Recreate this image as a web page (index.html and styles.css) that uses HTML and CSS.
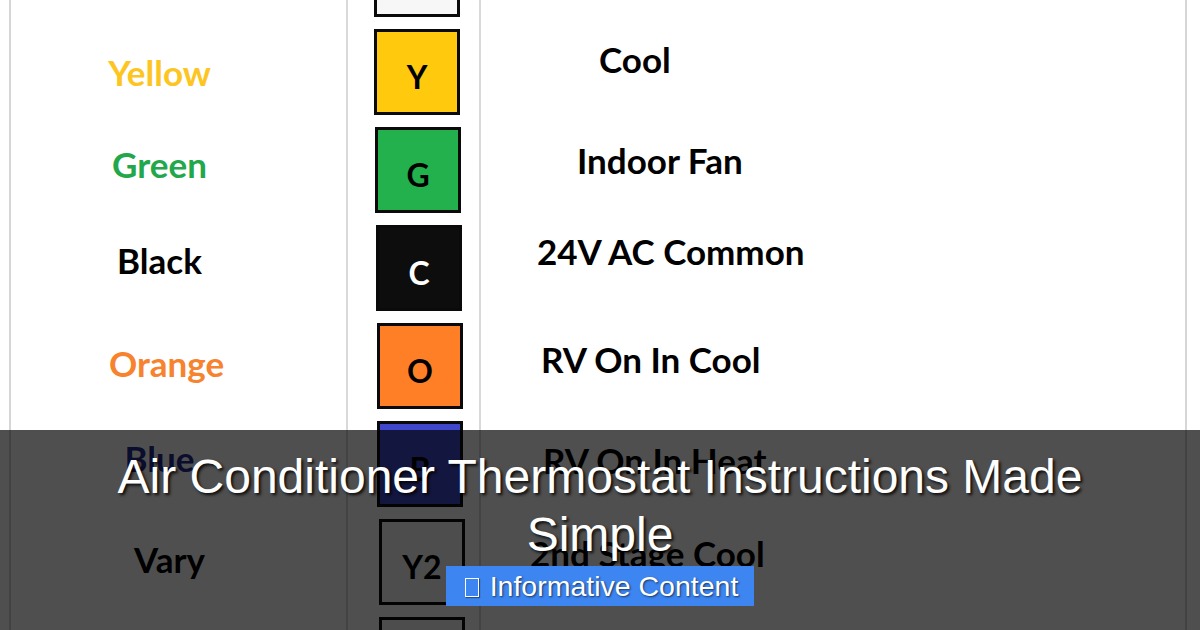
FILE: index.html
```html
<!DOCTYPE html>
<html lang="en">
<head>
<meta charset="utf-8">
<title>Air Conditioner Thermostat Instructions Made Simple</title>
<link rel="stylesheet" href="styles.css">
</head>
<body>
<div class="page">
  <div class="table">
    <div class="row">
      <div class="cell name"></div>
      <div class="cell term"><div class="box box-white"></div></div>
      <div class="cell func"></div>
    </div>
    <div class="row">
      <div class="cell name"><span class="c-yellow">Yellow</span></div>
      <div class="cell term t1"><div class="box box-yellow">Y</div></div>
      <div class="cell func f-cool"><span>Cool</span></div>
    </div>
    <div class="row">
      <div class="cell name n-green"><span class="c-green">Green</span></div>
      <div class="cell term t2"><div class="box box-green">G</div></div>
      <div class="cell func f-fan"><span>Indoor Fan</span></div>
    </div>
    <div class="row">
      <div class="cell name n-black"><span class="c-black">Black</span></div>
      <div class="cell term t3"><div class="box box-black">C</div></div>
      <div class="cell func f-common"><span>24V AC Common</span></div>
    </div>
    <div class="row">
      <div class="cell name n-orange"><span class="c-orange">Orange</span></div>
      <div class="cell term t4"><div class="box box-orange">O</div></div>
      <div class="cell func f-rvcool"><span>RV On In Cool</span></div>
    </div>
    <div class="row">
      <div class="cell name n-blue"><span class="c-blue">Blue</span></div>
      <div class="cell term t4"><div class="box box-blue">B</div></div>
      <div class="cell func f-rvheat"><span>RV On In Heat</span></div>
    </div>
    <div class="row">
      <div class="cell name n-vary"><span class="c-black">Vary</span></div>
      <div class="cell term t5"><div class="box box-white">Y2</div></div>
      <div class="cell func f-stage"><span>2nd Stage Cool</span></div>
    </div>
    <div class="row">
      <div class="cell name"></div>
      <div class="cell term t5"><div class="box box-white"></div></div>
      <div class="cell func"></div>
    </div>
  </div>

  <div class="overlay">
    <h1 class="title">Air Conditioner Thermostat Instructions Made Simple</h1>
    <div class="badge"><span class="tofu"></span><span class="badge-text">Informative Content</span></div>
  </div>
</div>
</body>
</html>
```

FILE: styles.css
```css
* { box-sizing: border-box; }

html, body {
  margin: 0;
  padding: 0;
  background: #ffffff;
}

.page {
  position: relative;
  width: 1200px;
  height: 630px;
  overflow: hidden;
  background: #ffffff;
}

.table {
  width: 1178px;
  margin-left: 9px;
  margin-top: -75px;
  border-left: 2px solid #d6d6d6;
  border-right: 2px solid #d6d6d6;
}

.row {
  display: grid;
  grid-template-columns: 337px 133px 704px;
  height: 98px;
}

.cell {
  display: flex;
  align-items: center;
  font-family: Lato, "Open Sans", sans-serif;
  font-weight: 700;
  font-size: 35px;
  color: #000;
}

.name {
  justify-content: center;
  border-right: 2px solid #d9d9d9;
  padding-right: 38px;
  padding-top: 0;
}

.name span { display: block; }

.n-green { padding-bottom: 12px; }
.n-black { padding-bottom: 16px; }
.n-orange { padding-left: 14px; padding-right: 38px; padding-bottom: 6px; }
.n-blue { padding-bottom: 12px; }
.n-vary { padding-left: 20px; padding-bottom: 6px; }

.c-yellow { color: #fdc521; }
.c-green { color: #22a84b; }
.c-black { color: #000000; }
.c-orange { color: #f7832e; }
.c-blue { color: #222a8a; }

.term {
  border-right: 2px solid #d9d9d9;
  padding-left: 26px;
}

.t1 { padding-left: 26px; }
.t2 { padding-left: 27px; }
.t3 { padding-left: 28px; }
.t4 { padding-left: 29px; }
.t5 { padding-left: 31px; }

.box {
  width: 86px;
  height: 86px;
  border: 3px solid #0a0a0a;
  display: flex;
  align-items: center;
  justify-content: center;
  padding-top: 8px;
  font-family: Lato, "Open Sans", sans-serif;
  font-weight: 700;
  font-size: 32px;
  color: #000;
}

.box-white { background: #f7f7f7; }
.box-yellow { background: #ffc90e; }
.box-green { background: #22b14c; }
.box-black { background: #0d0d0d; color: #ffffff; }
.box-orange { background: #ff7f27; }
.box-blue { background: #3f48cc; }

.func span { display: block; white-space: nowrap; }

.f-cool { padding-left: 118px; padding-bottom: 26px; }
.f-fan { padding-left: 96px; padding-bottom: 20px; }
.f-common { padding-left: 56px; padding-bottom: 34px; }
.f-rvcool { padding-left: 60px; padding-bottom: 14px; }
.f-rvheat { padding-left: 62px; padding-bottom: 8px; }
.f-stage { padding-left: 49px; padding-bottom: 18px; }

.overlay {
  position: absolute;
  left: 0;
  right: 0;
  bottom: 0;
  height: 200px;
  background: rgba(0, 0, 0, 0.69);
  display: flex;
  flex-direction: column;
  align-items: center;
  padding-top: 18px;
}

.title {
  margin: 0;
  width: 1000px;
  text-align: center;
  font-family: "Liberation Sans", Arial, sans-serif;
  font-weight: 400;
  font-size: 48px;
  line-height: 58px;
  color: #ffffff;
  text-shadow: 2px 2px 3px rgba(0, 0, 0, 0.85);
}

.badge {
  margin-top: 2px;
  height: 40px;
  display: flex;
  align-items: center;
  padding: 0 16px 0 19px;
  background: #3d85f0;
  font-family: "Liberation Sans", Arial, sans-serif;
  font-size: 28.5px;
  color: #ffffff;
  text-shadow: 1px 1px 2px rgba(0, 0, 0, 0.6);
}

.tofu {
  width: 14px;
  height: 19px;
  border: 1.5px solid #ffffff;
  margin-right: 11px;
  margin-top: 2px;
  box-shadow: 1px 1px 1px rgba(0, 0, 0, 0.4);
}

.badge-text { line-height: 40px; }
```
